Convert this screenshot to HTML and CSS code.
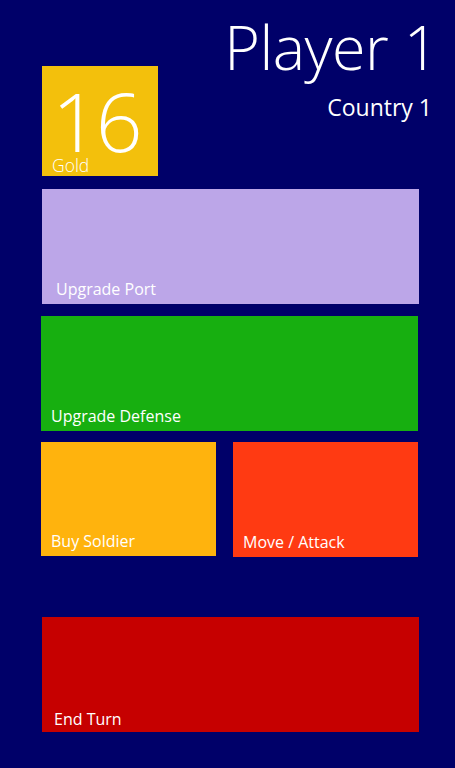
FILE: index.html
```html
<!DOCTYPE html>
<html lang="en">
<head>
<meta charset="utf-8">
<title>Player 1</title>
<link rel="stylesheet" href="styles.css">
</head>
<body>
<main class="screen">
  <header class="top">
    <div class="tile gold">
      <div class="gold-value">16</div>
      <div class="gold-label">Gold</div>
    </div>
    <div class="player">
      <h1 class="player-name">Player 1</h1>
      <p class="country">Country 1</p>
    </div>
  </header>
  <section class="tiles">
    <button class="tile wide purple"><span class="label">Upgrade Port</span></button>
    <button class="tile wide green shift"><span class="label label-tight">Upgrade Defense</span></button>
    <div class="row">
      <button class="tile half orange"><span class="label label-tight">Buy Soldier</span></button>
      <button class="tile half2 red-orange"><span class="label label-tight">Move / Attack</span></button>
    </div>
    <button class="tile wide red end"><span class="label label-end">End Turn</span></button>
  </section>
</main>
</body>
</html>
```

FILE: styles.css
```css
* { box-sizing: border-box; }
html, body {
  margin: 0;
  padding: 0;
  background: #000069;
}
body {
  width: 455px;
  height: 768px;
  overflow: hidden;
  font-family: "Open Sans", "Noto Sans", sans-serif;
  color: #ffffff;
}
.screen {
  padding-left: 42px;
}
.top {
  display: flex;
  justify-content: space-between;
  align-items: flex-start;
  padding-right: 23px;
}
.player {
  text-align: right;
}
.player-name {
  margin: 15px -6px 0 0;
  font-size: 61px;
  line-height: 64px;
  font-weight: 300;
  letter-spacing: -0.5px;
}
.country {
  margin: 16px 0 0 0;
  font-size: 23px;
  line-height: 24px;
  font-weight: 400;
}
.tile {
  display: flex;
  flex-direction: column;
  justify-content: flex-end;
  border: 0;
  margin: 0;
  padding: 0;
  color: #ffffff;
  font-family: inherit;
  text-align: left;
}
.gold {
  margin-top: 66px;
  width: 116px;
  height: 110px;
  background: #f3c00c;
  justify-content: flex-start;
  padding-left: 10px;
}
.gold-value {
  margin-top: 18px;
  font-size: 82px;
  line-height: 72px;
  font-weight: 300;
  letter-spacing: -3px;
}
.gold-label {
  font-size: 17.5px;
  line-height: 18px;
  font-weight: 300;
}
.tiles {
  display: flex;
  flex-direction: column;
  padding-top: 13px;
}
.wide {
  width: 377px;
  height: 115px;
}
.label {
  font-size: 16px;
  line-height: 20px;
  font-weight: 400;
  padding: 0 0 5px 14px;
}
.label-tight {
  padding-left: 10px;
}
.label-end {
  padding-left: 12px;
  padding-bottom: 3px;
}
.purple { background: #bca6e8; }
.green { background: #17af10; margin-top: 12px; }
.shift { margin-left: -1px; }
.row {
  display: flex;
  gap: 17px;
  margin-top: 11px;
  margin-left: -1px;
  align-items: flex-start;
}
.half {
  width: 175px;
  height: 114px;
}
.half2 {
  width: 185px;
  height: 115px;
}
.orange { background: #ffb30d; }
.red-orange { background: #ff3a12; }
.red { background: #c60000; }
.end { margin-top: 60px; }
```
